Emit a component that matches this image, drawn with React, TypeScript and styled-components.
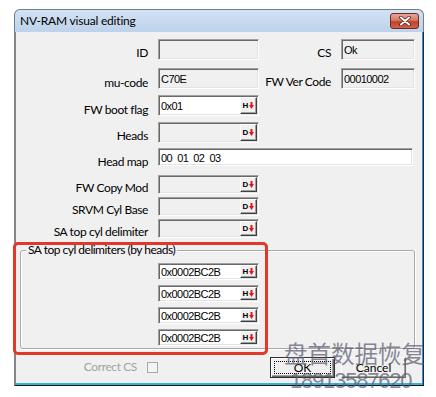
import React from "react";
import styled, { createGlobalStyle } from "styled-components";

const Global = createGlobalStyle`
  html, body { margin: 0; padding: 0; background: #ffffff; }
  body { min-height: 397px; font-family: Lato, "Liberation Sans", sans-serif; font-size: 12px; color: #000; }
`;

const Dialog = styled.div`
  position: relative;
  margin: 9px 0 0 14px;
  width: 410px;
  height: 377px;
  display: flex;
  flex-direction: column;
`;

const TitleBar = styled.div`
  height: 23px;
  flex: none;
  box-sizing: border-box;
  border: 1px solid #6d7f95;
  border-bottom: none;
  border-radius: 6px 6px 0 0;
  background: linear-gradient(#d3e2f3, #bdd2eb);
  display: flex;
  align-items: flex-start;
  justify-content: space-between;
  padding: 3px 4px 0 5px;
`;

const Title = styled.span`
  font-family: Lato, "Liberation Sans", sans-serif;
  font-size: 12px;
  letter-spacing: -0.2px;
  line-height: 16px;
  color: #000;
`;

const CloseBtn = styled.div`
  width: 29px;
  height: 16px;
  box-sizing: border-box;
  border: 1px solid #6e2a22;
  border-radius: 3px;
  background: linear-gradient(#e6a497 0%, #d67a66 45%, #c2402c 55%, #d0614a 100%);
  display: flex;
  align-items: center;
  justify-content: center;
`;

const Client = styled.div`
  flex: 1;
  box-sizing: border-box;
  background: #f0f0f0;
  border-left: 2px solid #858585;
  border-right: 1px solid #262626;
  border-bottom: 1px solid #111;
  box-shadow: inset -1px 0 0 #3b8fd1, inset 0 -2px 0 #33b3df;
  display: flex;
  flex-direction: column;
  padding-top: 7px;
`;

const Row = styled.div<{ $mt: number; $h: number }>`
  display: flex;
  align-items: flex-start;
  height: ${(p) => p.$h}px;
  margin-top: ${(p) => p.$mt}px;
`;

const Label = styled.div<{ $w: number; $pt: number; $dim?: boolean }>`
  width: ${(p) => p.$w}px;
  flex: none;
  text-align: right;
  margin-right: 10px;
  padding-top: ${(p) => p.$pt}px;
  font-size: 12px;
  letter-spacing: -0.4px;
  line-height: 14px;
  white-space: nowrap;
  color: ${(p) => (p.$dim ? "#a3a3a3" : "#000")};
`;

const Field = styled.div<{ $w: number; $h: number; $white?: boolean }>`
  width: ${(p) => p.$w}px;
  height: ${(p) => p.$h}px;
  flex: none;
  box-sizing: border-box;
  border-style: solid;
  border-width: 1px;
  border-color: #a0a0a0 #ffffff #ffffff #a0a0a0;
  box-shadow: inset 1px 1px 0 #696969, inset -1px -1px 0 #e3e3e3;
  background: ${(p) => (p.$white ? "#ffffff" : "#f0f0f0")};
  display: flex;
  align-items: stretch;
  justify-content: space-between;
  padding: 1px 1px 1px 2px;
`;

const FieldText = styled.span`
  align-self: center;
  font-family: "Liberation Sans", Arial, sans-serif;
  font-size: 11px;
  letter-spacing: -0.55px;
  line-height: 14px;
  padding-top: 1px;
  white-space: pre;
`;

const DropBtn = styled.div`
  width: 17px;
  flex: none;
  box-sizing: border-box;
  border-style: solid;
  border-width: 1px;
  border-color: #ffffff #404040 #404040 #ffffff;
  box-shadow: inset -1px -1px 0 #a0a0a0;
  background: #f0f0f0;
  display: flex;
  align-items: center;
  justify-content: center;
  gap: 1px;
  font-family: "Liberation Sans", Arial, sans-serif;
  font-weight: bold;
  font-size: 8px;
  line-height: 8px;
`;

const GroupBox = styled.div`
  position: relative;
  margin: 12px 8px 0 4px;
  height: 99px;
  box-sizing: border-box;
  border: 1px solid #a9a9a9;
  border-radius: 3px;
  box-shadow: inset 1px 1px 0 #fff, 1px 1px 0 #fff;
  display: flex;
  flex-direction: column;
  align-items: flex-start;
  padding: 12px 0 0 137px;
  gap: 5px;
`;

const GroupLegend = styled.span`
  position: absolute;
  left: 5px;
  top: -8px;
  padding: 0 2px;
  background: #f0f0f0;
  font-size: 12px;
  letter-spacing: -0.5px;
  line-height: 14px;
  white-space: nowrap;
`;

const Footer = styled.div`
  display: flex;
  align-items: center;
  margin-top: 7px;
  height: 22px;
`;

const CheckBox = styled.div`
  width: 11px;
  height: 11px;
  box-sizing: border-box;
  border: 1px solid #a8a8a8;
  background: #f4f4f4;
  margin-right: 112px;
`;

const Button = styled.div<{ $default?: boolean }>`
  width: 65px;
  height: 21px;
  box-sizing: border-box;
  border-style: solid;
  border-width: 1px;
  border-color: ${(p) => (p.$default ? "#303030" : "#ffffff #696969 #696969 #ffffff")};
  box-shadow: ${(p) =>
    p.$default
      ? "inset 1px 1px 0 #fff, inset -1px -1px 0 #696969, inset -2px -2px 0 #a0a0a0"
      : "inset -1px -1px 0 #a0a0a0"};
  outline: ${(p) => (p.$default ? "1px dotted #000" : "none")};
  outline-offset: -5px;
  background: #f0f0f0;
  display: flex;
  align-items: center;
  justify-content: center;
  font-size: 12px;
  margin-right: 6px;
`;

const RedFrame = styled.div`
  position: absolute;
  left: -1px;
  top: 233px;
  width: 255px;
  height: 113px;
  box-sizing: border-box;
  border: 3px solid #e2382c;
  border-radius: 5px;
  pointer-events: none;
`;

const Watermark = styled.div`
  position: absolute;
  left: 270px;
  top: 330px;
  display: flex;
  flex-direction: column;
  align-items: flex-start;
  color: rgba(92, 92, 112, 0.72);
  pointer-events: none;
  z-index: 2;
`;

const WmCn = styled.span`
  font-family: "Noto Sans CJK SC", sans-serif;
  font-size: 23.5px;
  line-height: 28px;
  white-space: nowrap;
`;

const WmNum = styled.span`
  font-family: "Liberation Sans", Arial, sans-serif;
  font-size: 22px;
  line-height: 22px;
  letter-spacing: -1.2px;
  margin-left: 6px;
  margin-top: 3px;
`;

const Arrow = () => (
  <svg width="5" height="7" viewBox="0 0 5 7">
    <rect x="1.5" y="0" width="2" height="3.5" fill="#e8141b" />
    <path d="M0 3 L5 3 L2.5 7 Z" fill="#e8141b" />
  </svg>
);

const Drop = ({ letter }: { letter: string }) => (
  <DropBtn>
    <span>{letter}</span>
    <Arrow />
  </DropBtn>
);

const LW = 132;

export default function App() {
  return (
    <>
      <Global />
      <Dialog>
        <TitleBar>
          <Title>NV-RAM visual editing</Title>
          <CloseBtn>
            <svg width="12" height="10" viewBox="0 0 12 10">
              <path d="M2 1.5 L10 8.5 M10 1.5 L2 8.5" stroke="#5a1d16" strokeWidth="3.6" strokeLinecap="round" />
              <path d="M2 1.5 L10 8.5 M10 1.5 L2 8.5" stroke="#ffffff" strokeWidth="2" strokeLinecap="round" />
            </svg>
          </CloseBtn>
        </TitleBar>
        <Client>
          <Row $mt={0} $h={21}>
            <Label $w={LW} $pt={7}>ID</Label>
            <Field $w={101} $h={21} />
            <Label $w={72} $pt={7}>CS</Label>
            <Field $w={74} $h={21}>
              <FieldText>Ok</FieldText>
            </Field>
          </Row>
          <Row $mt={8} $h={21}>
            <Label $w={LW} $pt={8}>mu-code</Label>
            <Field $w={101} $h={21}>
              <FieldText>C70E</FieldText>
            </Field>
            <Label $w={72} $pt={7}>FW Ver Code</Label>
            <Field $w={74} $h={21}>
              <FieldText>00010002</FieldText>
            </Field>
          </Row>
          <Row $mt={6} $h={21}>
            <Label $w={LW} $pt={8}>FW boot flag</Label>
            <Field $w={101} $h={21} $white>
              <FieldText>0x01</FieldText>
              <Drop letter="H" />
            </Field>
          </Row>
          <Row $mt={6} $h={21}>
            <Label $w={LW} $pt={7}>Heads</Label>
            <Field $w={101} $h={21}>
              <span />
              <Drop letter="D" />
            </Field>
          </Row>
          <Row $mt={5} $h={18}>
            <Label $w={LW} $pt={7}>Head map</Label>
            <Field $w={255} $h={18} $white>
              <FieldText>00  01  02  03</FieldText>
            </Field>
          </Row>
          <Row $mt={9} $h={19}>
            <Label $w={LW} $pt={6}>FW Copy Mod</Label>
            <Field $w={101} $h={19}>
              <span />
              <Drop letter="D" />
            </Field>
          </Row>
          <Row $mt={3} $h={19}>
            <Label $w={LW} $pt={6}>SRVM Cyl Base</Label>
            <Field $w={101} $h={19}>
              <span />
              <Drop letter="D" />
            </Field>
          </Row>
          <Row $mt={3} $h={19}>
            <Label $w={LW} $pt={6}>SA top cyl delimiter</Label>
            <Field $w={101} $h={19}>
              <span />
              <Drop letter="D" />
            </Field>
          </Row>
          <GroupBox>
            <GroupLegend>SA top cyl delimiters (by heads)</GroupLegend>
            {[0, 1, 2, 3].map((i) => (
              <Field key={i} $w={101} $h={17} $white>
                <FieldText>0x0002BC2B</FieldText>
                <Drop letter="H" />
              </Field>
            ))}
          </GroupBox>
          <Footer>
            <Label $w={121} $pt={0} $dim>
              Correct CS
            </Label>
            <CheckBox />
            <Button $default>OK</Button>
            <Button>Cancel</Button>
          </Footer>
        </Client>
        <RedFrame />
        <Watermark>
          <WmCn>盘首数据恢复</WmCn>
          <WmNum>18913587620</WmNum>
        </Watermark>
      </Dialog>
    </>
  );
}
